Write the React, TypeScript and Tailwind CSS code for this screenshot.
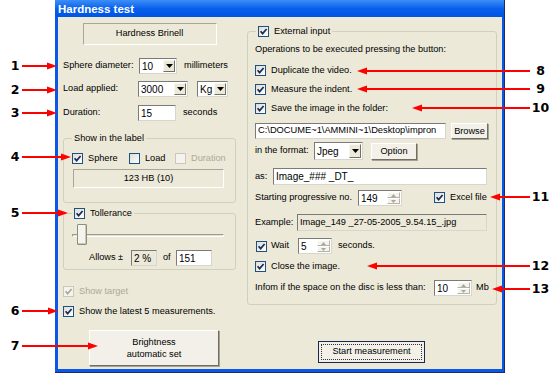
import React from "react";

const leftMarks = [
  { n: "1", y: 66, tip: 57 },
  { n: "2", y: 90, tip: 57 },
  { n: "3", y: 113, tip: 57 },
  { n: "4", y: 157, tip: 71 },
  { n: "5", y: 213, tip: 68 },
  { n: "6", y: 311, tip: 58 },
  { n: "7", y: 346, tip: 98 },
];

const rightMarks = [
  { n: "8", y: 71, tip: 357 },
  { n: "9", y: 89, tip: 357 },
  { n: "10", y: 108, tip: 412 },
  { n: "11", y: 197, tip: 490 },
  { n: "12", y: 266, tip: 367 },
  { n: "13", y: 289, tip: 492 },
];

function Check({ checked = true, disabled = false }: { checked?: boolean; disabled?: boolean }) {
  return (
    <span
      className={
        disabled
          ? "flex h-[11px] w-[11px] shrink-0 items-center justify-center border border-[#cac8bb] bg-[#f4f3ee]"
          : "flex h-[11px] w-[11px] shrink-0 items-center justify-center border border-[#1c5180] bg-linear-to-br from-[#dcdcd7] to-white"
      }
    >
      {checked && (
        <svg viewBox="0 0 9 9" className="h-[9px] w-[9px]">
          <path d="M1.6 4.2 3.6 6.6 7.6 2" fill="none" stroke={disabled ? "#aca899" : "#1e2a52"} strokeWidth="1.7" />
        </svg>
      )}
    </span>
  );
}

function Combo({ value, className }: { value: string; className: string }) {
  return (
    <div className={`flex items-stretch border border-t-[#7a7a7a] border-l-[#7a7a7a] border-b-[#d8d6cc] border-r-[#d8d6cc] bg-white ${className}`}>
      <span className="flex flex-1 items-center overflow-hidden pl-[2px] text-[10px]">{value}</span>
      <span className="m-px flex w-[12px] items-center justify-center border border-t-[#f8f7f2] border-l-[#f8f7f2] border-b-[#716f64] border-r-[#716f64] bg-[#ece9d8]">
        <svg viewBox="0 0 7 4" className="h-[4px] w-[7px]">
          <path d="M0 0h7L3.5 4z" fill="#000" />
        </svg>
      </span>
    </div>
  );
}

function Edit({
  value,
  className,
  readOnly = false,
  textSize,
}: {
  value: string;
  className: string;
  readOnly?: boolean;
  textSize?: string;
}) {
  const size = textSize ?? (readOnly ? "text-[9.2px]" : "text-[10px]");
  return (
    <div
      className={`flex items-center overflow-hidden whitespace-nowrap border border-t-[#7a7a7a] border-l-[#7a7a7a] border-b-[#d8d6cc] border-r-[#d8d6cc] pl-[2px] ${
        readOnly ? "bg-[#ece9d8]" : "bg-white"
      } ${size} ${className}`}
    >
      {value}
    </div>
  );
}

function Spin({ value, className }: { value: string; className: string }) {
  return (
    <div className={`flex items-stretch border border-t-[#7a7a7a] border-l-[#7a7a7a] border-b-[#d8d6cc] border-r-[#d8d6cc] bg-white ${className}`}>
      <span className="flex flex-1 items-center pl-[2px] text-[10px]">{value}</span>
      <span className="m-px flex w-[13px] flex-col">
        <span className="flex flex-1 items-center justify-center border border-t-white border-l-white border-b-[#b5b3a8] border-r-[#b5b3a8] bg-[#f4f3ee]">
          <svg viewBox="0 0 5 3" className="h-[3px] w-[5px]">
            <path d="M0 3h5L2.5 0z" fill="#aca899" />
          </svg>
        </span>
        <span className="flex flex-1 items-center justify-center border border-t-white border-l-white border-b-[#b5b3a8] border-r-[#b5b3a8] bg-[#f4f3ee]">
          <svg viewBox="0 0 5 3" className="h-[3px] w-[5px]">
            <path d="M0 0h5L2.5 3z" fill="#aca899" />
          </svg>
        </span>
      </span>
    </div>
  );
}

function Btn({ children, className }: { children: React.ReactNode; className: string }) {
  return (
    <div
      className={`flex items-center justify-center border border-t-white border-l-white border-b-[#716f64] border-r-[#716f64] bg-[#f2f0e8] text-center leading-[12px] shadow-[1px_1px_0_#a5a294] ${className}`}
    >
      {children}
    </div>
  );
}

export default function App() {
  return (
    <div className="relative h-[373px] w-[560px] overflow-hidden bg-white font-['Liberation_Sans',Arial,sans-serif] text-[9.2px] text-black">
      <div className="ml-[55px] flex h-[373px] w-[450px] flex-col border-r border-b border-[#1d2c66] bg-[#0a58e6] pb-[3px] pl-[3px] pr-[2px]">
        <div className="-ml-[3px] -mr-[2px] flex h-[17px] bg-linear-to-b from-[#3c8ef6] via-[#0760ec] to-[#0054e3] pl-[3px] pt-[3px] text-[11.5px] font-bold leading-[13px] text-white">
          Hardness test
        </div>

        <div className="flex h-[352px] w-[444px] bg-[#ece9d8] pl-[5px]">
          {/* left pane */}
          <div className="flex w-[173px] flex-col">
            <div className="mt-[6px] flex h-[22px] w-[134px] items-center justify-center self-center border border-t-[#a8a698] border-l-[#a8a698] border-b-white border-r-white">
              Hardness Brinell
            </div>

            <div className="mt-[13px] flex h-[16px] items-center">
              <span className="w-[76px]">Sphere diameter:</span>
              <Combo value="10" className="h-[16px] w-[38px]" />
              <span className="ml-[7px]">millimeters</span>
            </div>
            <div className="mt-[7px] flex h-[16px] items-center">
              <span className="w-[75px]">Load applied:</span>
              <Combo value="3000" className="h-[16px] w-[50px]" />
              <Combo value="Kg" className="ml-[9px] h-[16px] w-[31px]" />
            </div>
            <div className="mt-[8px] flex h-[16px] items-center">
              <span className="w-[75px]">Duration:</span>
              <Edit value="15" className="h-[16px] w-[38px]" />
              <span className="ml-[7px]">seconds</span>
            </div>

            <fieldset className="mt-[11px] rounded-[3px] border border-[#d0d0bf] px-[8px] pb-[14px]">
              <legend className="h-[12px] px-[2px] leading-[12px]">Show in the label</legend>
              <div className="mt-[8px] flex h-[13px] items-center">
                <span className="flex w-[57px] items-center gap-[5px]">
                  <Check />
                  Sphere
                </span>
                <span className="flex w-[46px] items-center gap-[5px]">
                  <Check checked={false} />
                  Load
                </span>
                <span className="flex items-center gap-[5px] text-[#aca899]">
                  <Check checked={false} disabled />
                  Duration
                </span>
              </div>
              <div className="ml-px mt-[4px] flex h-[19px] w-[151px] items-center justify-center border border-t-[#a8a698] border-l-[#a8a698] border-b-white border-r-white">
                123 HB (10)
              </div>
            </fieldset>

            <fieldset className="mt-[4px] rounded-[3px] border border-[#d0d0bf] px-[8px] pb-[3px]">
              <legend className="flex h-[13px] items-center gap-[5px] px-[2px]">
                <Check />
                Tollerance
              </legend>
              <div className="relative mt-[4px] flex h-[22px] items-center">
                <div className="h-[3px] w-[152px] border-t border-l border-t-[#9d9b8e] border-l-[#9d9b8e] border-b border-r border-b-white border-r-white bg-[#e2e0d6]" />
                <div className="absolute left-[5px] top-0 h-[21px] w-[10px] rounded-[1px] border border-[#8f8d80] bg-[#f4f3ee] shadow-[inset_-1px_-1px_0_#c9c7ba]" />
              </div>
              <div className="mt-[4px] flex h-[16px] items-center pl-[17px]">
                <span className="w-[42px]">Allows ±</span>
                <Edit value="2 %" readOnly textSize="text-[10px]" className="h-[16px] w-[26px]" />
                <span className="ml-[6px] w-[13px]">of</span>
                <Edit value="151" className="h-[16px] w-[36px]" />
              </div>
            </fieldset>

            <div className="mt-[15px] flex h-[13px] items-center gap-[5px] text-[#aca899]">
              <Check disabled />
              Show target
            </div>
            <div className="mt-[7px] flex h-[13px] items-center gap-[5px]">
              <Check />
              Show the latest 5 measurements.
            </div>

            <Btn className="ml-[26px] mt-[12px] h-[36px] w-[130px]">
              Brightness
              <br />
              automatic set
            </Btn>
          </div>

          {/* right pane */}
          <div className="ml-[11px] flex w-[249px] flex-col">
            <fieldset className="mt-[8px] rounded-[3px] border border-[#d0d0bf] px-[7px] pb-[8px]">
              <legend className="ml-px flex h-[13px] items-center gap-[5px] px-[2px]">
                <Check />
                External input
              </legend>
              <div className="mt-[6px] flex h-[12px] items-center whitespace-nowrap">
                Operations to be executed pressing the button:
              </div>
              <div className="mt-[8px] flex h-[13px] items-center gap-[5px]">
                <Check />
                Duplicate the video.
              </div>
              <div className="mt-[6px] flex h-[13px] items-center gap-[5px]">
                <Check />
                Measure the indent.
              </div>
              <div className="mt-[6px] flex h-[13px] items-center gap-[5px]">
                <Check />
                Save the image in the folder:
              </div>
              <div className="mt-[8px] flex h-[16px] items-center">
                <Edit value="C:\DOCUME~1\AMMINI~1\Desktop\impron" textSize="text-[9.3px]" className="h-[16px] w-[191px]" />
                <Btn className="ml-[5px] h-[16px] w-[37px]">Browse</Btn>
              </div>
              <div className="mt-[3px] flex h-[18px] items-center">
                <span className="w-[59px]">in the format:</span>
                <Combo value="Jpeg" className="h-[18px] w-[49px]" />
                <Btn className="ml-[8px] h-[17px] w-[46px]">Option</Btn>
              </div>
              <div className="mt-[8px] flex h-[17px] items-center">
                <span className="w-[18px]">as:</span>
                <Edit value="Image_### _DT_" className="h-[17px] w-[214px]" />
              </div>
              <div className="mt-[5px] flex h-[16px] items-center">
                <span className="w-[103px]">Starting progressive no.</span>
                <Spin value="149" className="h-[16px] w-[44px]" />
                <span className="ml-[32px] flex items-center gap-[5px]">
                  <Check />
                  Excel file
                </span>
              </div>
              <div className="mt-[8px] flex h-[17px] items-center">
                <span className="w-[42px]">Example:</span>
                <Edit value="Image_149 _27-05-2005_9.54.15_.jpg" readOnly className="h-[17px] w-[190px]" />
              </div>
              <div className="mt-[7px] flex h-[16px] items-center">
                <span className="ml-px">
                  <Check />
                </span>
                <span className="ml-[4px] w-[27px]">Wait</span>
                <Spin value="5" className="h-[16px] w-[34px]" />
                <span className="ml-[6px]">seconds.</span>
              </div>
              <div className="mt-[6px] flex h-[13px] items-center gap-[5px]">
                <Check />
                Close the image.
              </div>
              <div className="mt-[7px] flex h-[16px] items-center">
                <span className="w-[179px] whitespace-nowrap">Infom if the space on the disc is less than:</span>
                <Spin value="10" className="h-[16px] w-[38px]" />
                <span className="ml-[4px]">Mb</span>
              </div>
            </fieldset>

            <div className="mt-[36px] flex h-[22px] w-[107px] items-center justify-center self-center border border-[#1a2650] bg-[#f2f0e8] p-[2px]">
              <div className="flex h-full w-full items-center justify-center border border-dotted border-[#333]">
                Start measurement
              </div>
            </div>
          </div>
        </div>
      </div>

      {/* annotation arrows */}
      <svg className="pointer-events-none absolute left-0 top-0 h-[373px] w-[560px]" viewBox="0 0 560 373">
        {leftMarks.map((m) => (
          <g key={m.n} fill="#f00" stroke="#f00">
            <line x1={22} y1={m.y} x2={m.tip - 8} y2={m.y} strokeWidth={2} />
            <polygon points={`${m.tip},${m.y} ${m.tip - 10},${m.y - 3.5} ${m.tip - 10},${m.y + 3.5}`} strokeWidth={0} />
          </g>
        ))}
        {rightMarks.map((m) => (
          <g key={m.n} fill="#f00" stroke="#f00">
            <line x1={m.tip + 8} y1={m.y} x2={530} y2={m.y} strokeWidth={2} />
            <polygon points={`${m.tip},${m.y} ${m.tip + 10},${m.y - 3.5} ${m.tip + 10},${m.y + 3.5}`} strokeWidth={0} />
          </g>
        ))}
      </svg>

      {leftMarks.map((m) => (
        <span
          key={m.n}
          className="absolute left-[5px] w-[20px] text-center font-['DejaVu_Sans',sans-serif] text-[12.5px] font-bold leading-[16px]"
          style={{ top: m.y - 8 }}
        >
          {m.n}
        </span>
      ))}
      {rightMarks.map((m) => (
        <span
          key={m.n}
          className="absolute left-[528px] w-[25px] text-center font-['DejaVu_Sans',sans-serif] text-[12.5px] font-bold leading-[16px]"
          style={{ top: m.y - 8 }}
        >
          {m.n}
        </span>
      ))}
    </div>
  );
}
